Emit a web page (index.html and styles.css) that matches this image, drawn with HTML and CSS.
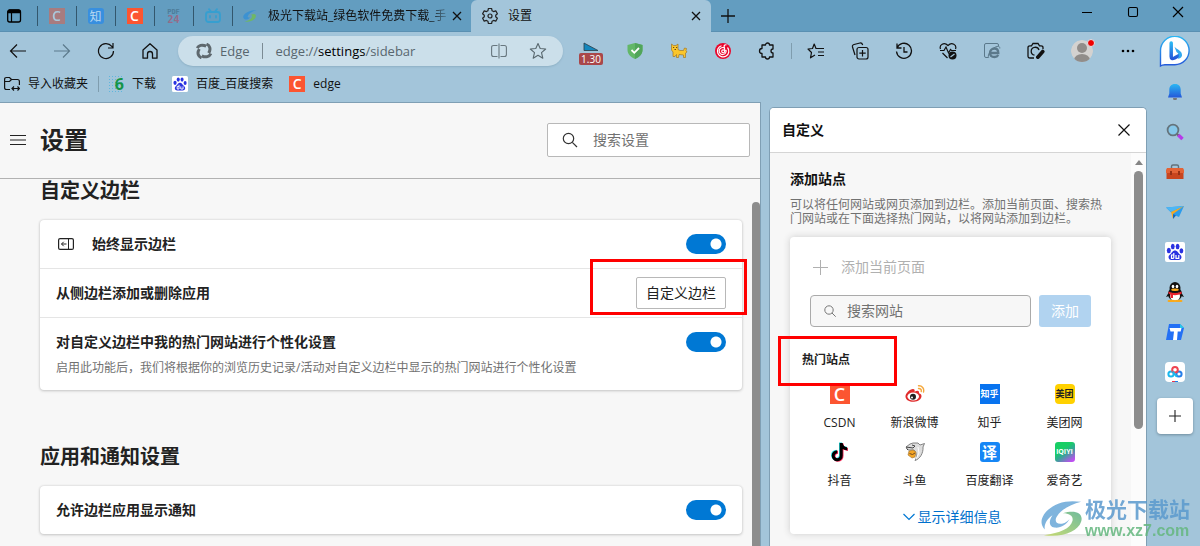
FILE: index.html
```html
<!DOCTYPE html>
<html lang="zh-CN">
<head>
<meta charset="utf-8">
<meta name="viewport" content="width=device-width, initial-scale=1">
<title>设置</title>
<link rel="stylesheet" href="styles.css">
</head>
<body>
<header class="tabbar">
  <button class="tab-actions" aria-label="标签操作菜单"><svg width="16" height="16" viewBox="0 0 16 16"><rect x="1.700" y="2" width="12.800" height="12" rx="2" fill="none" stroke="#000" stroke-width="1.300"/><path d="M1.500 3.500Q1.500 1.500 3.500 1.500H12.500Q14.500 1.500 14.500 3.500V5.200H1.500Z"/><path d="M5.500 5V14" stroke="#000" stroke-width="1.200"/></svg></button>
  <div class="pin"><span class="fav csdn faded">C</span></div>
  <div class="pin"><span class="fav zhi">知</span></div>
  <div class="pin"><span class="fav csdn">C</span></div>
  <div class="pin"><span class="pdf"><b>PDF</b><i>24</i></span></div>
  <div class="pin"><svg width="16" height="16" viewBox="0 0 16 16" fill="none" stroke="#369fd0" stroke-width="1.800" stroke-linecap="round"><rect x="1" y="4" width="14" height="10" rx="2.500"/><path d="M4 1.200L6 3.500M12 1.200L10 3.500M5 8V9.500M11 8V9.500"/></svg></div>
  <div class="tab">
    <svg width="14" height="14" viewBox="0 0 44 40"><path d="M12 31C-2 32 -4 17 12 9C21 4 31 2 42 1C27 7 17 14 15 21C14 25 18 26 22 23C20 28 16 31 12 31Z" fill="#3c92d2"/><path d="M24 17C35 10 43 14 40 23C37 32 23 39 5 38C18 34 27 29 28 23C29 19 27 17 24 17Z" fill="#6fb765"/></svg>
    <span class="tab-title fade">极光下载站_绿色软件免费下载_手</span>
    <button class="close" aria-label="关闭标签页"><svg width="10" height="10" viewBox="0 0 10 10"><path d="M1 1L9 9M9 1L1 9" stroke="#111" stroke-width="1.300"/></svg></button>
  </div>
  <div class="tab active">
    <svg width="18" height="18" viewBox="0 0 18 18" fill="none" stroke="#222" stroke-width="1.200" stroke-linejoin="round"><path d="M7.400 1.500H10.600L11.100 3.800L12.500 4.600L14.800 3.900L16.400 6.700L14.700 8.200V9.800L16.400 11.300L14.800 14.100L12.500 13.400L11.100 14.200L10.600 16.500H7.400L6.900 14.200L5.500 13.400L3.200 14.100L1.600 11.300L3.300 9.800V8.200L1.600 6.700L3.200 3.900L5.500 4.600L6.900 3.800Z"/><circle cx="9" cy="9" r="2"/></svg>
    <span class="tab-title">设置</span>
    <button class="close" aria-label="关闭标签页"><svg width="10" height="10" viewBox="0 0 10 10"><path d="M1 1L9 9M9 1L1 9" stroke="#111" stroke-width="1.300"/></svg></button>
  </div>
  <button class="new-tab" aria-label="新建标签页"><svg width="14" height="14" viewBox="0 0 14 14"><path d="M7 0V14M0 7H14" stroke="#111" stroke-width="1.300"/></svg></button>
  <div class="win-controls">
    <button aria-label="最小化"><svg width="12" height="12" viewBox="0 0 12 12"><path d="M1 6.500H11" stroke="#000"/></svg></button>
    <button aria-label="最大化"><svg width="12" height="12" viewBox="0 0 12 12"><rect x="1.500" y="1.500" width="9" height="9" rx="1.500" fill="none" stroke="#000" stroke-width="1.100"/></svg></button>
    <button aria-label="关闭"><svg width="12" height="12" viewBox="0 0 12 12"><path d="M1 1L11 11M11 1L1 11" stroke="#000" stroke-width="1.200"/></svg></button>
  </div>
</header>

<div class="shell">
  <div class="browser">
    <div class="toolbar">
      <div class="tools">
        <button aria-label="返回"><svg width="18" height="18" viewBox="0 0 18 18" fill="none" stroke="#111" stroke-width="1.200"><path d="M17 9H1.500M8 2.500L1.500 9L8 15.500"/></svg></button>
        <button aria-label="前进"><svg width="18" height="18" viewBox="0 0 18 18" fill="none" stroke="#5c7a8c" stroke-width="1.200"><path d="M1 9H16.500M10 2.500L16.500 9L10 15.500"/></svg></button>
        <button aria-label="刷新"><svg width="18" height="18" viewBox="0 0 18 18" fill="none" stroke="#111" stroke-width="1.200"><path d="M16.500 9A7.500 7.500 0 1 1 14.800 4.300L16 6M16 1V6H11"/></svg></button>
        <button aria-label="主页"><svg width="18" height="18" viewBox="0 0 18 18" fill="none" stroke="#111" stroke-width="1.300" stroke-linejoin="round"><path d="M2 8L9 1.800L16 8V16.200H11.500V12A2.500 2.500 0 0 0 6.500 12V16.200H2Z"/></svg></button>
      </div>
      <div class="address">
        <svg width="16" height="16" viewBox="0 0 16 16" fill="none" stroke="#5e686e" stroke-width="3"><path d="M1.200 5.200C2.500 2.500 6 1 10.200 3.200"/><path d="M10.500 1.200C13.500 2.200 15.400 6 12.600 10"/><path d="M14.800 10.500C13.500 13.500 10 15 5.800 12.800"/><path d="M5.500 14.800C2.500 13.800 .600 10 3.400 6"/></svg>
        <span class="brand">Edge</span>
        <a class="url" href="#sidebar">edge://<b>settings</b>/sidebar</a>
        <button aria-label="分屏"><svg width="16" height="16" viewBox="0 0 16 16" fill="none" stroke="#68777f" stroke-width="1.100"><path d="M6.500 2.500H2.500Q.600 2.500 .600 4.500V11.500Q.600 13.500 2.500 13.500H6.500M9.500 2.500H13.500Q15.400 2.500 15.400 4.500V11.500Q15.400 13.500 13.500 13.500H9.500M8 .500V15.500"/></svg></button>
        <button aria-label="收藏"><svg width="18" height="18" viewBox="0 0 18 18" fill="none" stroke="#59686f" stroke-width="1.100" stroke-linejoin="round"><path d="M9 1.500L11.200 6.500L16.700 7L12.500 10.700L13.800 16.200L9 13.300L4.200 16.200L5.500 10.700L1.300 7L6.800 6.500Z"/></svg></button>
      </div>
      <div class="tools">
        <button class="ext" aria-label="速度"><svg width="24" height="24" viewBox="0 0 24 24"><path d="M5 4L19 11.500H5Z" fill="#1487bd" stroke="#2a3c48" stroke-width=".800"/></svg><span class="badge">1.30</span></button>
        <button aria-label="防护"><svg width="18" height="18" viewBox="0 0 18 18"><path d="M9 1L16.500 3V8C16.500 12 13 15.500 9 17C5 15.500 1.500 12 1.500 8V3Z" fill="#62b767"/><path d="M9 1L16.500 3V8C16.500 12 13 15.500 9 17Z" fill="#51a55a"/><path d="M5.500 8L8.300 10.800L13 6" stroke="#fff" stroke-width="1.800" fill="none"/></svg></button>
        <button aria-label="篡改猫"><svg width="18" height="18" viewBox="0 0 18 18"><path d="M1.500 2L3.500 3.500H6L8 2V7.500L10 8.500H13.500L14.500 6L16.500 6.500L16 8.500L17 10L15.500 11V15.500H13.500V13L9 12.500L8.500 15.500H6.500V12.500L5 14.500H3V10L1.500 8Z" fill="#fac62b" stroke="#a07727" stroke-width=".700"/><path d="M3 5.500H4.200M6 5.500H7.200M4.500 7.500H6" stroke="#6b4914"/></svg></button>
        <button aria-label="音乐"><svg width="18" height="18" viewBox="0 0 18 18"><circle cx="9" cy="9" r="8" fill="#e9062b"/><g fill="none" stroke="#fff" stroke-width="1.200"><path d="M7.500 3.700A5.700 5.700 0 1 0 13.500 5.500M12.500 2.800C10.500 2.500 9.800 3.500 10.200 5L11 9.200M10 5.800A3.500 3.500 0 1 0 12 8"/><circle cx="9.200" cy="9.300" r="1.500"/></g></svg></button>
        <button aria-label="扩展"><svg width="18" height="18" viewBox="0 0 18 18" fill="none" stroke="#111" stroke-width="1.300" stroke-linejoin="round"><path d="M4 3H7.500A2 2 0 0 1 11.500 3H15V7A2 2 0 0 0 15 11V15H11.500A2 2 0 0 1 7.500 15H4V11.500A2.300 2.300 0 0 1 4 6.500Z"/></svg></button>
      </div>
      <span class="divider"></span>
      <div class="tools">
        <button aria-label="收藏夹"><svg width="18" height="18" viewBox="0 0 18 18" fill="none" stroke="#111" stroke-width="1.200" stroke-linejoin="round"><path d="M11 6.500H9L7.200 2L5.500 6.500L1 7L4.500 10.500L3.500 15.800L8 13M10 6.500H17M11 10H17M11 13.500H17"/></svg></button>
        <button aria-label="集锦"><svg width="18" height="18" viewBox="0 0 18 18" fill="none" stroke="#111" stroke-width="1.200"><rect x="6" y="5.500" width="11" height="11.500" rx="2"/><path d="M11.500 8V14.500M8.300 11.200H14.700M4 13L1.500 5Q1 3 3 2.500L9 1Q11 .700 11.700 3"/></svg></button>
        <button aria-label="历史记录"><svg width="18" height="18" viewBox="0 0 18 18" fill="none" stroke="#111" stroke-width="1.300"><path d="M2 1.500V6H6.500M2 6A7.500 7.500 0 1 1 1.500 9.500M9 5V10H12.500"/></svg></button>
        <button aria-label="性能"><svg width="18" height="18" viewBox="0 0 18 18" fill="none" stroke="#111" stroke-width="1.200"><path d="M1.500 7C0 3 5-.500 9 3.500C13-.500 18 3 16.500 7M1 8.500H5L7 5L9.500 11L11.500 7.500L12.500 8.500H17M3.500 11L8.500 16"/><circle cx="13.500" cy="13.500" r="4" fill="#111" stroke="none"/><path d="M11.500 15L15.500 12" stroke="#a3c5da"/></svg></button>
        <button aria-label="IE 模式"><svg width="18" height="18" viewBox="0 0 18 18" fill="none" stroke="#5b798b"><path d="M15.500 4V3Q15.500 1.500 14 1.500H3Q1.500 1.500 1.500 3V14Q1.500 15.500 3 15.500H5"/><path d="M7 11H15.300C15.300 7.500 13.500 6.500 11.500 6.500C9 6.500 7 8.500 7 11C7 13.500 9 15 11.500 15C13.200 15 14.500 14.400 15.300 13" stroke-width="2.300"/><path d="M6 16C4 14.500 6.500 9 10.500 6.200C14 3.700 17 3.500 16.800 6.500"/></svg></button>
        <button aria-label="网页捕获"><svg width="18" height="18" viewBox="0 0 18 18" fill="none" stroke="#111" stroke-width="1.300"><path d="M7 16H3Q1 16 1 14V5.500Q1 3.800 3 3.800H4.500L6 1.500H11L12.500 3.800H14Q16 3.800 16 5.500V7M12 8A4 4 0 1 0 7.500 13.200"/><path d="M15.800 9.500L10.800 15.200" stroke-width="3.600" stroke-linecap="round"/></svg></button>
        <button class="avatar" aria-label="个人资料"><svg width="28" height="28" viewBox="0 0 28 28"><defs><clipPath id="disc"><circle cx="14" cy="14" r="11"/></clipPath></defs><g clip-path="url(#disc)"><circle cx="14" cy="14" r="11" fill="#d4d2d0"/><circle cx="14" cy="11" r="5" fill="#918d8a"/><ellipse cx="14" cy="23" rx="8" ry="6" fill="#918d8a"/></g><circle cx="23" cy="6" r="3.500" fill="#f00000" stroke="#dce7ed"/></svg></button>
        <button aria-label="更多"><svg width="16" height="4" viewBox="0 0 16 4"><circle cx="3" cy="2" r="1.300"/><circle cx="8" cy="2" r="1.300"/><circle cx="13" cy="2" r="1.300"/></svg></button>
      </div>
    </div>

    <nav class="bookmarks">
      <a href="#import"><svg width="16" height="16" viewBox="0 0 16 16" fill="none" stroke="#111" stroke-width="1.200"><path d="M6 13.500H2.500Q.600 13.500 .600 11.500V3.500Q.600 1.500 2.500 1.500H5.500L7.500 3.500H13.500Q15.400 3.500 15.400 5.500V9M.600 5.500H5.500L7.500 3.500M8 12.500H15.500M10 10.500L8 12.500L10 14.500M13.500 10.500L15.500 12.500L13.500 14.500"/></svg>导入收藏夹</a>
      <span class="divider"></span>
      <a href="#download"><span class="six">6</span>下载</a>
      <a href="#baidu"><svg width="16" height="16" viewBox="0 0 20 20"><rect width="20" height="20" rx="2" fill="#fff"/><g fill="#2932e1"><ellipse cx="3.800" cy="8.500" rx="2" ry="2.700"/><ellipse cx="7.800" cy="4.500" rx="1.900" ry="2.700"/><ellipse cx="12.600" cy="4.500" rx="1.900" ry="2.700"/><ellipse cx="16.400" cy="8.800" rx="1.900" ry="2.600"/><path d="M10 8.500C12.500 8.500 13 11 15 12.500C18 15 16 18.500 13 18H7C4 18.500 2 15 5 12.500C7 11 7.500 8.500 10 8.500Z"/></g><path d="M8.800 11V16.300M8.800 13H6.500V16.300H8.800M11 13V16.300H13.800V13" fill="none" stroke="#fff" stroke-width="1.200"/></svg>百度_百度搜索</a>
      <a href="#edge"><span class="fav csdn">C</span>edge</a>
    </nav>

    <div class="content">
      <main class="settings">
        <div class="settings-head">
          <button class="menu" aria-label="菜单"><svg width="16" height="10" viewBox="0 0 16 10"><path d="M0 .500H16M0 5H16M0 9.500H16" stroke="#222"/></svg></button>
          <h1>设置</h1>
          <label class="search"><svg width="16" height="16" viewBox="0 0 16 16" fill="none" stroke="#333" stroke-width="1.200"><circle cx="6.500" cy="6.500" r="5.200"/><path d="M10.300 10.300L15 15"/></svg><input type="search" placeholder="搜索设置" aria-label="搜索设置"></label>
        </div>
        <div class="settings-body">
          <h2>自定义边栏</h2>
          <section class="card">
            <div class="row">
              <svg class="row-icon" width="16" height="12" viewBox="0 0 16 12" fill="none" stroke="#222"><rect x=".600" y=".600" width="14.800" height="10.800" rx="1.500" stroke-width="1.200"/><path d="M10.500 .500V11.500M8.500 6H3.500M5.700 3.800L3.500 6L5.700 8.200"/></svg>
              <label class="name" for="always">始终显示边栏</label>
              <input class="toggle" type="checkbox" id="always" checked>
            </div>
            <div class="row">
              <span class="name">从侧边栏添加或删除应用</span>
              <div class="customize"><button class="outline">自定义边栏</button><span class="mark mark-button"></span></div>
            </div>
            <div class="row tall">
              <div class="name"><label for="personal">对自定义边栏中我的热门网站进行个性化设置</label><p>启用此功能后，我们将根据你的浏览历史记录/活动对自定义边栏中显示的热门网站进行个性化设置</p></div>
              <input class="toggle" type="checkbox" id="personal" checked>
            </div>
          </section>
          <h2 class="second">应用和通知设置</h2>
          <section class="card">
            <div class="row">
              <label class="name" for="notify">允许边栏应用显示通知</label>
              <input class="toggle" type="checkbox" id="notify" checked>
            </div>
          </section>
          <span class="page-thumb"></span>
        </div>
      </main>

      <aside class="panel">
        <div class="panel-head"><h2>自定义</h2><button aria-label="关闭"><svg width="12" height="12" viewBox="0 0 12 12"><path d="M.500 .500L11.500 11.500M11.500 .500L.500 11.500" stroke="#111" stroke-width="1.200"/></svg></button></div>
        <div class="panel-body">
          <div class="panel-main">
            <h3>添加站点</h3>
            <p>可以将任何网站或网页添加到边栏。添加当前页面、搜索热门网站或在下面选择热门网站，以将网站添加到边栏。</p>
            <div class="add-card">
              <button class="add-current" disabled><svg width="15" height="15" viewBox="0 0 15 15"><path d="M7.500 0V15M0 7.500H15" stroke="#b0b0b0"/></svg>添加当前页面</button>
              <form class="add-form">
                <label class="site-search"><svg width="12" height="12" viewBox="0 0 12 12" fill="none" stroke="#777"><circle cx="5" cy="5" r="4.200"/><path d="M8 8L11.700 11.700"/></svg><input type="text" placeholder="搜索网站" aria-label="搜索网站"></label>
                <button class="add" type="button" disabled>添加</button>
              </form>
              <h4>热门站点<span class="mark mark-sites"></span></h4>
              <div class="sites">
                <a href="#csdn"><span class="logo csdn">C</span>CSDN</a>
                <a href="#weibo"><svg width="20" height="20" viewBox="0 0 20 20"><path d="M8 5C5 5 0 9.500 .500 13C1 16.500 5 18 9 17.700C13 17.500 16.500 15 16.500 12.200C16.500 10.500 15.500 9.700 14 9.300C14.500 7 13 6 9.500 7.700C10 6 9.500 5 8 5Z" fill="#e02b2b"/><ellipse cx="8.200" cy="12.500" rx="5.800" ry="4" fill="#fff"/><circle cx="8" cy="12.800" r="3" fill="#202020"/><circle cx="7" cy="13.500" r="1" fill="#fff"/><path d="M13.500 1.800C17 1.500 19.500 4.500 18.500 8M13.500 4.500C15.500 4.300 16.700 5.700 16.200 7.500" fill="none" stroke="#f5a83c" stroke-width="1.400" stroke-linecap="round"/></svg>新浪微博</a>
                <a href="#zhihu"><span class="logo zhihu">知乎</span>知乎</a>
                <a href="#meituan"><span class="logo meituan">美团</span>美团网</a>
                <a href="#douyin"><svg width="20" height="20" viewBox="0 0 20 20" fill="none" stroke-width="3"><path d="M10.500 .500V13A4 4 0 1 1 6.500 9.200M10.500 .500C10.500 3.500 13 6 16.500 6" stroke="#22dfe0"/><path d="M12 1.500V14A4 4 0 1 1 8 10.200M12 1.500C12 5 14.500 7.500 18 7.500" stroke="#fa2958"/><path d="M11.200 1V13.500A4 4 0 1 1 7.200 9.700M11.200 1C11.200 4 14 6.800 17.200 6.800" stroke="#000"/></svg>抖音</a>
                <a href="#douyu"><svg width="20" height="20" viewBox="0 0 20 20"><path d="M1 5L5 2L8 1H13L15 3L19.500 1.500L18 5C18.500 11 15 17 10 18.500C12 15 12 12 9 8L3 8Z" fill="#ddd" stroke="#777" stroke-width=".900"/><path d="M1 5L8 6L10 4L7 3M3 8L1.500 6.500" stroke="#444" fill="none"/><path d="M4 9L8 8L11 10L10 15L7 16L3 13Z" fill="#f4a626" stroke="#9b7132" stroke-width=".600"/><path d="M4.500 11.500L7.500 12.500L10 11" fill="none" stroke="#744920"/><path d="M13 5L14 11L11 17" stroke="#fff" fill="none"/></svg>斗鱼</a>
                <a href="#fanyi"><span class="logo fanyi">译</span>百度翻译</a>
                <a href="#iqiyi"><span class="logo iqiyi">iQIYI</span>爱奇艺</a>
              </div>
              <a class="more" href="#more"><svg width="12" height="8" viewBox="0 0 12 8"><path d="M.500 1L6 6.500L11.500 1" fill="none" stroke="#0078d4" stroke-width="1.200"/></svg>显示详细信息</a>
            </div>
          </div>
          <div class="track"><span class="arrow"></span><span class="thumb"></span></div>
        </div>
      </aside>
    </div>
  </div>

  <nav class="sidebar">
    <button class="bing" aria-label="必应"><svg width="32" height="34" viewBox="0 0 32 34"><defs><linearGradient id="blue" x1="0" y1="0" x2="0" y2="1"><stop stop-color="#2bb7f3"/><stop offset="1" stop-color="#2458d9"/></linearGradient></defs><path d="M1.500 30V14.500A14.300 14.300 0 1 1 15.800 28.800H6Q3 29 1.500 30Z" fill="#fff" stroke="url(#blue)" stroke-width="1.400"/><path d="M12.200 7V20.500Q12.200 23.500 15.500 22L20.500 19.200" fill="none" stroke="url(#blue)" stroke-width="3.500" stroke-linecap="round" stroke-linejoin="round"/><path d="M15.500 10.800C18 14 23.500 14.500 23 19.800C22.500 22 20.500 22.500 19 23C20.500 20 20 17.500 17.500 16Z" fill="#33a9ef"/></svg></button>
    <button aria-label="通知"><svg width="18" height="18" viewBox="0 0 18 18"><path d="M7 15H11L10.500 17H7.500Z" fill="#777"/><path d="M9 1C13 1 14.700 3.500 14.700 6.500V10.500L16 14.500H2L3.300 10.500V6.500C3.300 3.500 5 1 9 1Z" fill="url(#blue)"/></svg></button>
    <button aria-label="搜索"><svg width="18" height="18" viewBox="0 0 18 18"><path d="M10.500 10.500L12.500 12.500" stroke="#666" stroke-width="2"/><path d="M12.300 12L16.500 16" stroke="#b63aea" stroke-width="3.500"/><circle cx="7" cy="7" r="5.400" fill="#86c8ea" stroke="#65747c" stroke-width="1.800"/></svg></button>
    <button aria-label="工具"><svg width="20" height="18" viewBox="0 0 20 18"><path d="M6.500 5V3.500Q6.500 2 8 2H12Q13.500 2 13.500 3.500V5" fill="none" stroke="#63717a" stroke-width="1.400"/><path d="M2 5H18L19 7V10H1V7Z" fill="#e26336"/><path d="M1.500 10H18.500V16H1.500Z" fill="#c8451e"/><path d="M5 8H7V12H5ZM13 8H15V12H13Z" fill="#963015"/></svg></button>
    <button aria-label="发送"><svg width="20" height="18" viewBox="0 0 20 18"><path d="M1 4.500L19 3L14 14L8 11.500Z" fill="#2b9cec"/><path d="M1 4.500L19 3L6 9Z" fill="#4db7f5"/><path d="M8 11L11 12.500L8 16Z" fill="#1666b7"/><path d="M19 3L8 11V16L6 9Z" fill="#f6a923"/></svg></button>
    <button aria-label="百度"><svg width="20" height="20" viewBox="0 0 20 20"><rect width="20" height="20" rx="2" fill="#fff"/><g fill="#2932e1"><ellipse cx="3.800" cy="8.500" rx="2" ry="2.700"/><ellipse cx="7.800" cy="4.500" rx="1.900" ry="2.700"/><ellipse cx="12.600" cy="4.500" rx="1.900" ry="2.700"/><ellipse cx="16.400" cy="8.800" rx="1.900" ry="2.600"/><path d="M10 8.500C12.500 8.500 13 11 15 12.500C18 15 16 18.500 13 18H7C4 18.500 2 15 5 12.500C7 11 7.500 8.500 10 8.500Z"/></g><path d="M8.800 11V16.300M8.800 13H6.500V16.300H8.800M11 13V16.300H13.800V13" fill="none" stroke="#fff" stroke-width="1.200"/></svg></button>
    <button aria-label="QQ"><svg width="20" height="20" viewBox="0 0 20 20"><ellipse cx="10" cy="12" rx="7" ry="7" fill="#111"/><path d="M4 10L1 15L4 14M16 10L19 15L16 14" fill="#111"/><ellipse cx="10" cy="14" rx="5" ry="5" fill="#fff"/><ellipse cx="6.500" cy="19" rx="4" ry="1.300" fill="#f9a91b"/><ellipse cx="13.500" cy="19" rx="4" ry="1.300" fill="#f9a91b"/><ellipse cx="10" cy="6" rx="5.500" ry="6" fill="#111"/><ellipse cx="8" cy="4.500" rx="1.300" ry="1.800" fill="#fff"/><ellipse cx="12" cy="4.500" rx="1.300" ry="1.800" fill="#fff"/><ellipse cx="10" cy="7.700" rx="3.800" ry="1.200" fill="#f9a91b"/><path d="M3.500 9.500Q10 12.500 16.500 9.500V12Q12 13.500 8 13V16H5.500V12.500L3.500 11.500Z" fill="#e8212b"/></svg></button>
    <button aria-label="腾讯文档"><svg width="20" height="18" viewBox="0 0 20 18"><path d="M4 1H15L19 5L16 17H1Z" fill="#2370f5"/><path d="M15 1L19 5H15Z" fill="#27c9ea"/><path d="M4.500 5H16.500L15.700 8.500H12.700L12 17H8L9 8.500H5.500Z" fill="#fff"/></svg></button>
    <button aria-label="百度网盘"><svg width="20" height="20" viewBox="0 0 20 20"><rect width="20" height="20" rx="4" fill="#fff"/><g fill="none" stroke-width="2"><circle cx="6" cy="12" r="2.600" stroke="#1bb7ed"/><circle cx="14" cy="12" r="2.600" stroke="#267ee9"/><circle cx="10" cy="7.800" r="2.800" stroke="#ef4451"/><path d="M7.500 9.800C9 10 10 14.500 12.500 14.300" stroke="#1bb7ed"/></g><path d="M7 19.500H10" stroke="#eb3449"/><path d="M10 19.500H13" stroke="#1b7de8"/></svg></button>
    <button class="plus" aria-label="添加"><svg width="12" height="12" viewBox="0 0 12 12"><path d="M6 0V12M0 6H12" stroke="#222" stroke-width="1.100"/></svg></button>
  </nav>
</div>

<div class="watermark">
  <svg width="42" height="40" viewBox="0 0 44 40"><defs><linearGradient id="lime" x1="1" y1="0" x2="0" y2="1"><stop stop-color="#58b18b"/><stop offset="1" stop-color="#c3d75d"/></linearGradient></defs><path d="M4 32C-5 23 5 10 18 5C26 2 34 2 42 3C31 6 21 11 17 18C14 22 15 27 22 26C26 25 28 23 30 21C27 27 20 31 14 30C8 29 8 23 12 17C6 21 3 27 4 32Z" fill="#69a7d8"/><path d="M23 15C36 11 45 15 42 24C39 34 22 41 3 38C20 36 31 31 33 23C34 18 30 15 23 15Z" fill="url(#lime)"/></svg>
  <div><span class="wm-name">极光下载站</span><span class="wm-url">www.xz7.com</span></div>
</div>
</body>
</html>
```
FILE: styles.css
```css
* { box-sizing: border-box; }
body {
  margin: 0;
  height: 100vh;
  display: flex;
  flex-direction: column;
  overflow: hidden;
  background: #a3c5da;
  color: #111;
  font: 12px/16px "Open Sans", "Noto Sans CJK SC", sans-serif;
}
button {
  display: flex;
  align-items: center;
  justify-content: center;
  padding: 0;
  border: 0;
  background: none;
  color: inherit;
  font: inherit;
}
svg { display: block; flex: none; }
a { color: inherit; text-decoration: none; }
h1, h2, h3, h4, p { margin: 0; }
input { min-width: 0; border: 0; outline: 0; background: none; font: inherit; padding: 0; }
input::placeholder { color: #717171; opacity: 1; }

/* Tab strip */
.tabbar {
  flex: none;
  display: flex;
  align-items: stretch;
  height: 32px;
  background: #639dc0;
  box-shadow: inset 0 -1px #5a90b2;
}
.tab-actions { width: 37px; padding-right: 9px; }
.pin {
  flex: none;
  display: flex;
  align-items: center;
  justify-content: center;
  width: 39px;
  background: linear-gradient(#33576d, #33576d) 0 6px / 1px 20px no-repeat;
}
.fav {
  flex: none;
  width: 16px;
  height: 16px;
  text-align: center;
  font: 600 14px/16px "Open Sans", sans-serif;
  color: #fff;
}
.csdn { background: #fc5531; color: #fff; }
.faded { opacity: .45; }
.zhi { border-radius: 3px; background: #388fdf; color: #b9d9f1; font: 400 12px/16px "Noto Sans CJK SC", sans-serif; }
.pdf { display: grid; color: #4d7c99; font: 700 7px/8px "DejaVu Sans Mono", monospace; text-align: center; }
.pdf i { font-style: normal; font-size: 10px; color: #946c89; }
.tab {
  flex: none;
  display: flex;
  align-items: center;
  gap: 11px;
  width: 239px;
  padding: 0 8px 0 11px;
  background: linear-gradient(#33576d, #33576d) 0 6px / 1px 20px no-repeat;
}
.tab-title { flex: 1; white-space: nowrap; }
.fade { color: transparent; background: linear-gradient(90deg, #111 88%, #639dc0 100%); -webkit-background-clip: text; background-clip: text; }
.fade + .close { margin-left: -11px; }
.tab.active { gap: 9px; width: 240px; padding: 0 9px 0 10px; border-radius: 6px 6px 0 0; background: #a3c5da; }
.close { width: 12px; height: 16px; }
.new-tab { width: 34px; }
.win-controls { display: flex; height: 24px; margin-left: auto; }
.win-controls button { width: 46px; }
.win-controls button:last-child { width: 44px; }

/* Toolbar */
.shell { flex: 1; min-height: 0; display: grid; grid-template-columns: 1fr 53px; }
.browser { min-width: 0; min-height: 0; display: flex; flex-direction: column; }
.toolbar { flex: none; display: flex; align-items: center; height: 38px; padding: 0 7px 0 6px; }
.tools { flex: none; display: flex; gap: 20px; }
.tools button { width: 24px; height: 28px; }
.tools .avatar { width: 28px; }
.tools .ext { position: relative; }
.badge {
  position: absolute;
  top: 16px;
  left: 0;
  width: 24px;
  border-radius: 2px;
  background: #a9474a;
  color: #fff;
  font-size: 10px;
  line-height: 12px;
  text-align: center;
}
.divider { flex: none; width: 1px; height: 16px; margin: 0 12px; background: #7f9dae; }
.address {
  flex: 1;
  min-width: 0;
  display: flex;
  align-items: center;
  height: 30px;
  margin: 0 16px;
  padding: 0 16px 0 18px;
  border-radius: 15px;
  background: #cbdfea;
  box-shadow: 0 1px 2px #8db0c5;
  color: #58666e;
  font-size: 13px;
}
.brand { margin-left: 8px; padding-right: 12px; border-right: 1px solid #7b8b94; }
.url { flex: 1; margin-left: 13px; white-space: nowrap; }
.url b { color: #000; font-weight: 400; }
.address button { margin-left: 22px; }

/* Bookmarks */
.bookmarks { flex: none; display: flex; align-items: center; height: 28px; padding-left: 4px; margin-bottom: 4px; white-space: nowrap; }
.bookmarks a { display: flex; align-items: center; gap: 8px; margin-right: 16px; }
.bookmarks a:first-child { margin-right: 0; }
.bookmarks .divider { margin: 0 9px 0 10px; }
.six { width: 16px; color: #159447; font: 700 16px/16px "Open Sans", sans-serif; text-align: right; background: radial-gradient(#5fb6dd 1px, transparent 1px) 0 2px / 3px 3px; }

/* Settings page */
.content { flex: 1; min-height: 0; display: grid; grid-template-columns: minmax(0, 761fr) minmax(0, 378fr); column-gap: 8px; }
.settings {
  min-height: 0;
  display: flex;
  flex-direction: column;
  overflow: hidden;
  border: solid #7f9fb4;
  border-width: 1px 1px 0 0;
  background: #f7f7f7;
  color: #222;
}
.settings-head {
  flex: none;
  display: flex;
  align-items: center;
  height: 76px;
  padding: 0 10px 2px;
  border-bottom: 1px solid #b2b2b2;
}
.settings-head h1 { margin-left: 14px; font-size: 24px; line-height: 32px; }
.search {
  display: flex;
  align-items: center;
  gap: 15px;
  width: 203px;
  height: 34px;
  margin-left: auto;
  padding: 0 14px;
  border: 1px solid #b8b8b8;
  border-radius: 2px;
  background: #fff;
  font-size: 14px;
}
.search input { flex: 1; }
.settings-body { position: relative; flex: 1; min-height: 0; padding: 0 18px 0 40px; }
.settings-body h2 { margin-bottom: 17px; font-size: 20px; line-height: 24px; }
.settings-body .second { margin-top: 55px; }
.page-thumb { position: absolute; top: 23px; right: 0; bottom: -8px; width: 8px; border-radius: 4px; background: #8d8d8d; }
.card { border-radius: 4px; background: #fff; box-shadow: 0 0 2px #c9c9c9, 0 1px 3px #c8c8c8; }
.row { display: flex; align-items: center; min-height: 48px; padding: 0 16px; font-size: 14px; line-height: 20px; }
.row + .row { min-height: 49px; border-top: 1px solid #e5e5e5; }
.row-icon { margin: 0 18px 0 2px; }
.name { flex: 1; font-weight: 600; }
.name p { margin-top: 6px; color: #717171; font-size: 12px; font-weight: 400; }
.row.tall { align-items: flex-start; padding-top: 14px; padding-bottom: 12px; }
.toggle {
  flex: none;
  appearance: none;
  width: 40px;
  height: 20px;
  margin: 0;
  border-radius: 10px;
  background: radial-gradient(circle at 30px 10px, #fff 5px, #0078d4 6px);
}
.outline { width: 90px; height: 32px; border: 1px solid #b8b8b8; border-radius: 2px; background: #fff; }
.customize { position: relative; }
.mark { position: absolute; border: 3px solid #f00; pointer-events: none; }
.mark-button { top: -18px; right: -21px; width: 157px; height: 56px; }
.mark-sites { top: -16px; left: -24px; width: 119px; height: 50px; }

/* Side panel */
.panel {
  min-height: 0;
  display: flex;
  flex-direction: column;
  margin-top: 5px;
  border: 1px solid #7f9fb4;
  border-bottom: 0;
  border-radius: 5px 5px 0 0;
  background: #f7f7f7;
  color: #222;
}
.panel-head {
  flex: none;
  display: flex;
  align-items: center;
  justify-content: space-between;
  height: 45px;
  padding: 0 16px 0 12px;
  border-bottom: 1px solid #d5d5d5;
  border-radius: 4px 4px 0 0;
  background: #fff;
}
.panel h2, .panel h3 { font-size: 14px; line-height: 20px; color: #111; }
.panel-body { flex: 1; min-height: 0; display: flex; overflow: hidden; }
.panel-main { flex: 1; min-width: 0; padding: 16px 20px 0; }
.panel-main p { margin-top: 9px; line-height: 14px; color: #717171; }
.track { flex: none; display: flex; flex-direction: column; align-items: center; gap: 6px; width: 15px; padding-top: 7px; background: #fcfcfc; }
.arrow { border: 4px solid transparent; border-top: 0; border-bottom: 5px solid #858585; }
.thumb { width: 9px; height: 258px; border-radius: 5px; background: #8d8d8d; }
.add-card { margin-top: 11px; padding: 20px 9px 7px 12px; border-radius: 4px; background: #fff; box-shadow: 0 0 7px #ccc; }
.add-current { gap: 13px; margin-left: 11px; color: #b0b0b0; font-size: 14px; line-height: 20px; }
.add-form { display: flex; gap: 8px; margin: 18px 11px 0 8px; }
.site-search {
  flex: 1;
  min-width: 0;
  display: flex;
  align-items: center;
  gap: 11px;
  height: 32px;
  padding: 0 13px;
  border: 1px solid #aaa;
  border-radius: 4px;
  background: #f7f7f7;
  font-size: 14px;
}
.site-search input { flex: 1; }
.add { width: 52px; height: 32px; border-radius: 3px; background: #b1d3f0; color: #fff; font-size: 14px; }
.panel h4 { position: relative; z-index: 1; margin-top: 25px; font-size: 12px; line-height: 16px; }
.sites { display: grid; grid-template-columns: repeat(4, 1fr); row-gap: 11px; margin-top: 16px; }
.sites a { display: grid; justify-items: center; row-gap: 11px; }
.logo { display: block; width: 20px; height: 20px; text-align: center; color: #fff; font: 700 9px/20px "Noto Sans CJK SC", sans-serif; }
.logo.csdn { font: 600 18px/20px "Open Sans", sans-serif; }
.zhihu { background: #0873ef; }
.meituan { border-radius: 4px; background: #ffd100; color: #222; }
.fanyi { border-radius: 3px; background: #1686f5; font-size: 15px; }
.iqiyi { border-radius: 3px; background: linear-gradient(145deg, #18ce65 35%, #2eaa91 55%, #bd4ff0 90%); font: 700 7px/20px "Open Sans", sans-serif; }
.more { display: flex; align-items: center; justify-content: center; gap: 3px; margin-top: 18px; color: #0070cc; font-size: 14px; line-height: 20px; }

/* App sidebar */
.sidebar { display: flex; flex-direction: column; align-items: center; padding: 4px 0 0 3px; }
.sidebar button { flex: none; width: 40px; height: 40px; }
.sidebar .bing { height: 36px; align-items: flex-start; }
.sidebar .plus { width: 36px; height: 36px; margin-top: 6px; border-radius: 4px; background: #fff; box-shadow: 0 1px 3px #6f8b9c; }

/* Overlay brand */
.watermark { position: absolute; right: 10px; bottom: 6px; display: flex; align-items: center; gap: 2px; opacity: .85; }
.watermark div { display: grid; }
.wm-name { color: #5b9ace; font-size: 21px; line-height: 26px; font-weight: 700; }
.wm-url { color: #65b77f; font: 700 16px/18px "Liberation Sans", sans-serif; }
```
